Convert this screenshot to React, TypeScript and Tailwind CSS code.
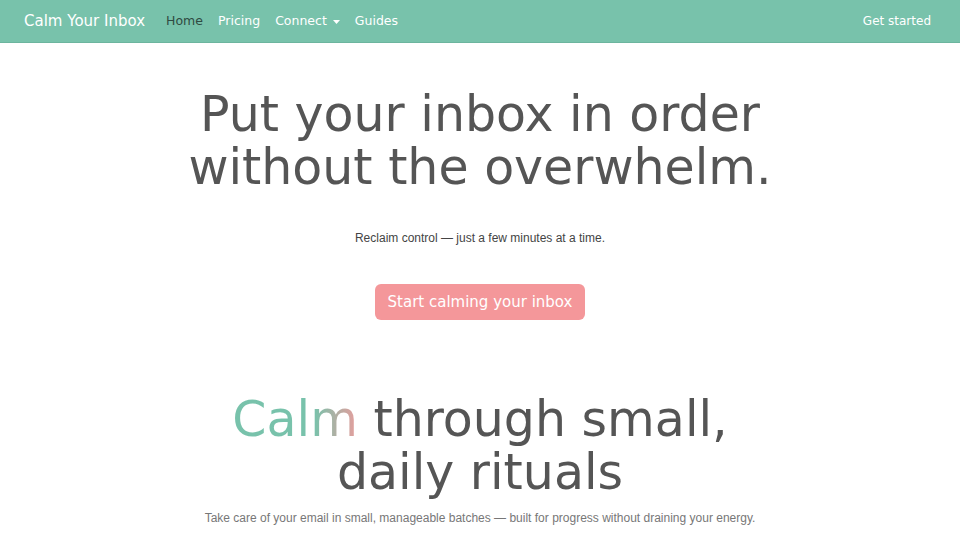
import React from 'react';

const heading = { fontFamily: '"DejaVu Sans", "Open Sans", sans-serif' };
const body = { fontFamily: '"Liberation Sans", Arial, sans-serif' };

const NavLink: React.FC<{ label: string; active?: boolean; caret?: boolean }> = ({ label, active, caret }) => (
  <a href="#" className={`flex items-center gap-1.5 text-[12.5px] ${active ? 'text-[#2f4a42]' : 'text-white'}`}>
    {label}
    {caret && (
      <svg width="7" height="4" viewBox="0 0 7 4" className="mt-px">
        <path d="M0 0h7L3.5 4z" fill="currentColor" />
      </svg>
    )}
  </a>
);

export default function App() {
  return (
    <div className="min-h-screen bg-white" style={heading}>
      <nav className="flex h-[43px] items-center justify-between border-b border-[#6cb59e] bg-[#78c2ab] pl-6 pr-[29px]">
        <div className="flex items-center">
          <span className="mr-[21px] text-[15px] text-white">Calm Your Inbox</span>
          <div className="flex items-center gap-[15px]">
            <NavLink label="Home" active />
            <NavLink label="Pricing" />
            <NavLink label="Connect" caret />
            <NavLink label="Guides" />
          </div>
        </div>
        <a href="#" className="text-[12px] text-white">Get started</a>
      </nav>

      <section className="flex flex-col items-center pt-[45px] text-center">
        <h1 className="text-[49px] leading-[53px] text-[#555555]">
          Put your inbox in order
          <br />
          without the overwhelm.
        </h1>
        <p className="mt-[35px] text-[12px] text-[#444444]" style={body}>
          Reclaim control — just a few minutes at a time.
        </p>
        <button className="mt-[37px] h-[36px] w-[210px] rounded-md bg-[#f4979a] text-[15px] text-white">
          Start calming your inbox
        </button>
      </section>

      <section className="flex flex-col items-center pt-[73px] text-center">
        <h2 className="text-[49px] leading-[53px] text-[#555555]">
          <span className="bg-[linear-gradient(90deg,#78c2ab_0%,#78c2ab_65%,#e89d9d_100%)] bg-clip-text text-transparent">
            Calm
          </span>{' '}
          through small,
          <br />
          daily rituals
        </h2>
        <p className="mt-[10px] text-[12px] text-[#777777]" style={body}>
          Take care of your email in small, manageable batches — built for progress without draining your energy.
        </p>
      </section>
    </div>
  );
}
